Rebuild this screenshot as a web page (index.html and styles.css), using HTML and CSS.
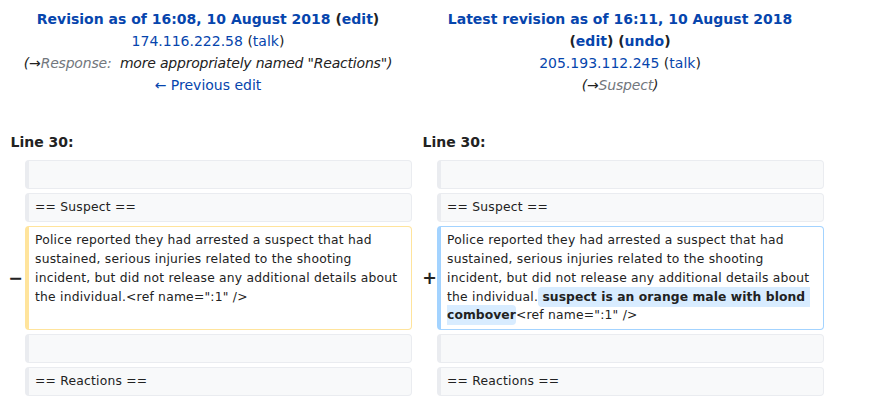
FILE: index.html
```html
<!DOCTYPE html>
<html lang="en">
<head>
<meta charset="utf-8">
<title>Difference between revisions</title>
<link rel="stylesheet" href="styles.css">
</head>
<body>
<div class="diff">
  <div class="title">
    <div><strong><a class="link" href="#">Revision as of 16:08, 10 August 2018</a> <span>(<a class="link" href="#">edit</a>)</span></strong></div>
    <div><a class="link" href="#">174.116.222.58</a> (<a class="link" href="#">talk</a>)</div>
    <div class="comment">(<a class="arrow" href="#">→</a><span class="autocomment">Response:</span>&nbsp; more appropriately named "Reactions")</div>
    <div><a class="link" href="#">← Previous edit</a></div>
  </div>
  <div class="title">
    <div><strong><a class="link" href="#">Latest revision as of 16:11, 10 August 2018</a> <span class="nowrap">(<a class="link" href="#">edit</a>) (<a class="link" href="#">undo</a>)</span></strong></div>
    <div><a class="link" href="#">205.193.112.245</a> (<a class="link" href="#">talk</a>)</div>
    <div class="comment">(<a class="arrow" href="#">→</a><span class="autocomment">Suspect</span>)</div>
  </div>

  <div class="lineno">Line 30:</div>
  <div class="lineno">Line 30:</div>

  <div class="marker"></div>
  <div class="cell context"><br></div>
  <div class="marker"></div>
  <div class="cell context"><br></div>

  <div class="marker"></div>
  <div class="cell context">== Suspect ==</div>
  <div class="marker"></div>
  <div class="cell context">== Suspect ==</div>

  <div class="marker"><span>−</span></div>
  <div class="cell deleted">Police reported they had arrested a suspect that had sustained, serious injuries related to the shooting incident, but did not release any additional details about the individual.&lt;ref name=":1" /&gt;</div>
  <div class="marker marker-add"><span>+</span></div>
  <div class="cell added">Police reported they had arrested a suspect that had sustained, serious injuries related to the shooting incident, but did not release any additional details about the individual.<ins class="change"> suspect is an orange male with blond combover</ins>&lt;ref name=":1" /&gt;</div>

  <div class="marker"></div>
  <div class="cell context"><br></div>
  <div class="marker"></div>
  <div class="cell context"><br></div>

  <div class="marker"></div>
  <div class="cell context">== Reactions ==</div>
  <div class="marker"></div>
  <div class="cell context">== Reactions ==</div>
</div>
</body>
</html>
```

FILE: styles.css
```css
html, body {
  margin: 0;
  padding: 0;
  background: #ffffff;
}

body {
  font-family: "DejaVu Sans", "Noto Sans", sans-serif;
  font-size: 14px;
  line-height: 22px;
  color: #222222;
}

.diff {
  display: grid;
  grid-template-columns: 17px 387px 17px 387px;
  column-gap: 4px;
  row-gap: 4px;
  padding: 8px 0 0 4px;
}

.title {
  grid-column: span 2;
  text-align: center;
}

.title strong {
  font-weight: bold;
}

.nowrap {
  white-space: nowrap;
}

.link {
  color: #0645ad;
  text-decoration: none;
}

.comment {
  font-style: italic;
  color: #222222;
  letter-spacing: -0.2px;
}

.arrow {
  color: #222222;
  text-decoration: none;
}

.autocomment {
  color: #72777d;
}

.lineno {
  grid-column: span 2;
  font-weight: bold;
  padding: 31px 6px 3px 6.5px;
}

.marker {
  display: flex;
  align-items: center;
  justify-content: flex-end;
  font-weight: bold;
  font-size: 17.5px;
  line-height: 1.2;
  color: #222222;
}

.marker span {
  margin-right: -2px;
}

.marker-add span {
  margin-right: -4px;
}

.cell {
  font-size: 12.32px;
  line-height: 18.9px;
  letter-spacing: 0.22px;
  padding: 4px 6px;
  border-style: solid;
  border-width: 1px 1px 1px 4px;
  border-radius: 4px;
  white-space: pre-wrap;
  overflow-wrap: break-word;
  color: #222222;
}

.context {
  background: #f8f9fa;
  border-color: #eaecf0;
}

.deleted {
  background: #ffffff;
  border-color: #ffe49c;
}

.added {
  background: #ffffff;
  border-color: #a3d3ff;
}

.change {
  text-decoration: none;
  font-weight: bold;
  letter-spacing: 0.08px;
  background: #d8ecff;
  border-radius: 4px;
  padding: 3px 0;
}
```
